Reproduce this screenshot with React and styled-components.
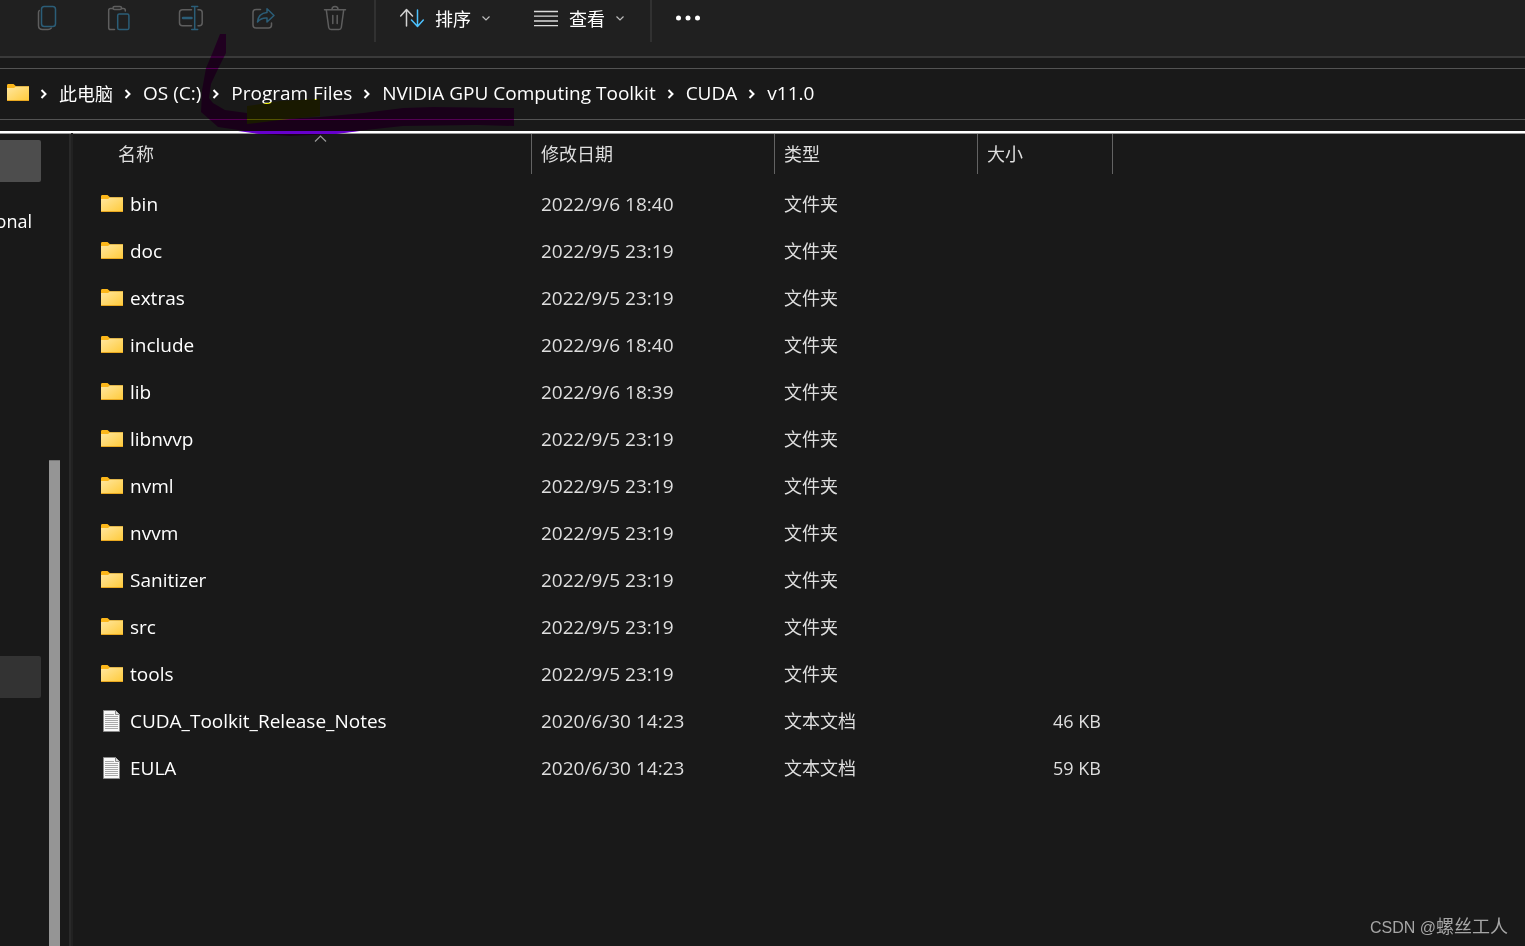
import React from "react";
import styled, { createGlobalStyle } from "styled-components";

const Global = createGlobalStyle`
  *, *::before, *::after { box-sizing: border-box; }
  body {
    margin: 0;
    background: #191919;
    color: #fff;
    font-family: "Open Sans", "Noto Sans CJK SC", sans-serif;
    font-size: 19px;
  }
  button { font: inherit; color: inherit; background: none; border: 0; padding: 0; }
`;

const Window = styled.div`
  position: relative;
  display: flex;
  flex-direction: column;
  min-height: 100vh;
  overflow: hidden;
`;

const Toolbar = styled.div`
  display: flex;
  align-items: flex-start;
  height: 58px;
  padding-left: 11px;
  background: #202020;
  border-bottom: 2px solid #3a3a3a;
`;

const IconButton = styled.button`
  display: flex;
  align-items: center;
  justify-content: center;
  width: 72px;
  height: 36px;
`;

const MenuButton = styled.button`
  display: flex;
  align-items: center;
  gap: 11px;
  height: 36px;
  margin-left: ${(p) => p.$gap}px;
  font-size: 18px;
`;

const Separator = styled.span`
  width: 2px;
  height: 42px;
  margin-left: ${(p) => p.$gap}px;
  background: #313131;
`;

const AddressArea = styled.div`
  padding: 10px 0 11px;
`;

const AddressBar = styled.nav`
  display: flex;
  align-items: center;
  height: 52px;
  padding: 0 7px 2px;
  border-top: 1px solid #535353;
  border-bottom: 1px solid #535353;
  white-space: nowrap;
`;

const Crumb = styled.a`
  color: #fff;
  text-decoration: none;
  font-size: ${(p) => (p.$cjk ? 18 : 19)}px;
`;

const CrumbArrow = styled.svg`
  flex: none;
  width: 7px;
  height: 10px;
  margin: 2px 12px 0 11px;
`;

const Body = styled.div`
  display: flex;
  flex: 1;
  border-top: 2px solid #fff;
  box-shadow: inset 0 1px #999;
`;

const Sidebar = styled.aside`
  display: flex;
  flex: none;
  width: 73px;
  padding-top: 1px;
  border-right: 2px solid #212121;
`;

const Tree = styled.div`
  display: flex;
  flex-direction: column;
  width: 41px;
  padding-top: 6px;
  overflow: hidden;
`;

const TreeItem = styled.button`
  display: flex;
  flex: none;
  align-items: center;
  justify-content: flex-end;
  height: 42px;
  margin-top: ${(p) => p.$gap || 0}px;
  padding-right: 9px;
  border-radius: 0 2px 2px 0;
  background: ${(p) => p.$tone || "transparent"};
  font-size: 18px;
`;

const ScrollTrack = styled.div`
  display: flex;
  width: 30px;
  padding: 326px 9px 0 8px;
  border-right: 2px solid #292929;
`;

const ScrollThumb = styled.div`
  flex: 1;
  background: #959595;
  border-top: 1px solid #777;
`;

const Main = styled.main`
  flex: 1;
  min-width: 0;
  padding-top: 1px;
`;

const Files = styled.table`
  table-layout: fixed;
  width: 1040px;
  border-collapse: separate;
  border-spacing: 0;
  white-space: nowrap;
`;

const HeadCell = styled.th`
  position: relative;
  width: ${(p) => p.$width}px;
  height: 40px;
  padding: 0 0 0 ${(p) => p.$indent || 9}px;
  border-right: 1px solid #636363;
  color: #dedede;
  font-size: 18px;
  font-weight: 400;
  line-height: 24px;
  text-align: left;
`;

const SortMark = styled.svg`
  position: absolute;
  top: 1px;
  right: 204px;
  width: 13px;
  height: 7px;
`;

const FileRows = styled.tbody`
  &::before { content: ""; display: block; height: 6px; }
`;

const Cell = styled.td`
  height: 47px;
  padding: 0 ${(p) => (p.$right ? 12 : 0)}px 0 9px;
  color: #dedede;
  font-size: ${(p) => (p.$small ? 18 : 19)}px;
  line-height: 26px;
  text-align: ${(p) => (p.$right ? "right" : "left")};
`;

const FileName = styled.div`
  display: flex;
  align-items: center;
  gap: 7px;
  padding-left: 19px;
  color: #fff;
`;

const Annotation = styled.svg`
  position: absolute;
  top: 0;
  left: 0;
  width: 530px;
  height: 140px;
  pointer-events: none;
  mix-blend-mode: ${(p) => p.$blend || "normal"};
`;

const Watermark = styled.footer`
  position: absolute;
  right: 17px;
  bottom: 5px;
  color: #a6a6a6;
  font-family: "Liberation Sans", "Noto Sans CJK SC", sans-serif;
  font-size: 16px;
  line-height: 26px;
`;

const Author = styled.span`
  font-size: 18px;
`;

const GREY = "#5e5e5e";
const BLUE = "#2b5d77";

const ToolIcon = ({ children }) => (
  <svg width="26" height="26" viewBox="0 0 26 26" fill="none" stroke={GREY} strokeWidth="1.5" strokeLinecap="round" strokeLinejoin="round" aria-hidden="true">
    {children}
  </svg>
);

const CopyIcon = () => (
  <ToolIcon>
    <path d="M5.300 5.500c-.6.6-.8 1.300-.8 2v13c0 2.500 1.500 4 4 4h5.500c1.500 0 2.500-.5 3.300-1.500" />
    <rect x="7.500" y="1.500" width="14" height="20" rx="2.800" stroke={BLUE} />
  </ToolIcon>
);

const PasteIcon = () => (
  <ToolIcon>
    <path d="M6.500 3.500H4.500c-1 0-1.800.8-1.800 1.800v17.400c0 1 .8 1.800 1.800 1.800h4M16 3.500h1.500c1 0 1.800.8 1.800 1.800V6" />
    <rect x="7" y="1.500" width="8.500" height="3" rx="1.500" />
    <rect x="11.700" y="9" width="11.200" height="15.500" rx="1.600" stroke={BLUE} />
  </ToolIcon>
);

const RenameIcon = () => (
  <ToolIcon>
    <path d="M13.500 4.700H4.500c-2 0-3 1.200-3 3v10c0 1.800 1 3 3 3h9M20 4.700h1.200c2 0 3 1.200 3 3v10c0 1.800-1 3-3 3H20" />
    <path d="M13.700 1.500h6M16.700 1.500v23M13.700 24.500h6" stroke={BLUE} />
    <path d="M5 13h8.500" stroke={BLUE} strokeWidth="2.500" />
  </ToolIcon>
);

const ShareIcon = () => (
  <ToolIcon>
    <path d="M10.500 4.500H6c-2 0-3 1.200-3 3v12.500c0 1.900 1 3 3 3h12.500c1.900 0 3-1.100 3-3V18" />
    <path d="M17 3.700 24 10.500 17 17v-4c-4-.3-7 1-9.500 4 .5-5.500 4-9 9.500-9.500z" stroke={BLUE} />
  </ToolIcon>
);

const TrashIcon = () => (
  <ToolIcon>
    <path d="M2.500 4.700h21M4.300 5l2.400 17.500c.2 1.200 1 2 2.300 2h8c1.300 0 2.100-.8 2.300-2L21.700 5M10 4.500c0-4 6-4 6 0M10.800 10.500v8M15.200 10.500v8" />
  </ToolIcon>
);

const SortIcon = () => (
  <svg width="24" height="20" viewBox="1 0 24 20" fill="none" strokeWidth="1.500" strokeLinecap="round" strokeLinejoin="round" aria-hidden="true">
    <path d="M7.500 18V2M1.700 8l5.800-6.500L13.500 8" stroke="#d2d2d2" />
    <path d="M18.500 2v16M12.500 12l6 6.500 5.800-6.500" stroke="#4cc2ff" />
  </svg>
);

const ListIcon = () => (
  <svg width="24" height="17" viewBox="0 0 24 17" fill="none" stroke="#dcdcdc" strokeWidth="1.300" aria-hidden="true">
    <path d="M0 1.500h24M0 6.200h24M0 11h24M0 15.700h24" />
  </svg>
);

const Chevron = () => (
  <svg width="8" height="5" viewBox="0 0 8 5" fill="none" stroke="#bdbdbd" strokeWidth="1.200" aria-hidden="true">
    <path d="M.5.5 4 4 7.500.5" />
  </svg>
);

const FolderIcon = () => (
  <svg width="22" height="18" viewBox="0 0 22 18" aria-hidden="true">
    <defs>
      <linearGradient id="folder" x1="0" y1="0" x2="1" y2="1">
        <stop offset="0" stopColor="#ffe7a0" />
        <stop offset="1" stopColor="#ffca39" />
      </linearGradient>
    </defs>
    <path d="M0 1.500C0 .6.500 0 1.300 0h5.200L9 2.300h13V8H0z" fill="#fcb71a" />
    <path d="M0 4h7l2-1.500h13V17H0z" fill="url(#folder)" />
    <path d="M0 16.500h22" stroke="#e9a820" />
  </svg>
);

const DocIcon = () => (
  <svg width="22" height="22" viewBox="0 0 22 22" aria-hidden="true">
    <path d="M2.500.5h12l4 4v17h-16z" fill="#f8f8f8" stroke="#8b8b8b" />
    <path d="M14.500.5v4h4" fill="#ddd" stroke="#8b8b8b" />
    <path d="M4 4.500h9M4 6.500h13M4 8.500h13M4 10.500h13M4 12.500h13M4 14.500h13M4 16.500h13M4 18.500h13" stroke="#a8a8a8" />
  </svg>
);

const tools = [
  ["复制", CopyIcon],
  ["粘贴", PasteIcon],
  ["重命名", RenameIcon],
  ["共享", ShareIcon],
  ["删除", TrashIcon],
];

const crumbs = ["此电脑", "OS (C:)", "Program Files", "NVIDIA GPU Computing Toolkit", "CUDA", "v11.0"];

const folder = (name, date) => ({ name, date, type: "文件夹" });
const files = [
  folder("bin", "2022/9/6 18:40"),
  folder("doc", "2022/9/5 23:19"),
  folder("extras", "2022/9/5 23:19"),
  folder("include", "2022/9/6 18:40"),
  folder("lib", "2022/9/6 18:39"),
  folder("libnvvp", "2022/9/5 23:19"),
  folder("nvml", "2022/9/5 23:19"),
  folder("nvvm", "2022/9/5 23:19"),
  folder("Sanitizer", "2022/9/5 23:19"),
  folder("src", "2022/9/5 23:19"),
  folder("tools", "2022/9/5 23:19"),
  { name: "CUDA_Toolkit_Release_Notes", date: "2020/6/30 14:23", type: "文本文档", size: "46 KB" },
  { name: "EULA", date: "2020/6/30 14:23", type: "文本文档", size: "59 KB" },
];

export default function App() {
  return (
    <Window>
      <Global />
      <Toolbar>
        {tools.map(([label, Icon]) => (
          <IconButton key={label} aria-label={label}><Icon /></IconButton>
        ))}
        <Separator $gap={3} />
        <MenuButton $gap={24}><SortIcon />排序<Chevron /></MenuButton>
        <MenuButton $gap={44}><ListIcon />查看<Chevron /></MenuButton>
        <Separator $gap={26} />
        <IconButton aria-label="更多">
          <svg width="26" height="6" viewBox="0 0 26 6" fill="#fff" aria-hidden="true">
            <circle cx="3.500" cy="3" r="2.500" /><circle cx="13" cy="3" r="2.500" /><circle cx="22.500" cy="3" r="2.500" />
          </svg>
        </IconButton>
      </Toolbar>
      <AddressArea>
        <AddressBar aria-label="路径">
          <FolderIcon />
          {crumbs.map((c, i) => (
            <React.Fragment key={c}>
              <CrumbArrow viewBox="0 0 7 10" fill="none" stroke="#fff" strokeWidth="2" aria-hidden="true">
                <path d="M1.500 1 5.500 5l-4 4" />
              </CrumbArrow>
              <Crumb href="#" $cjk={i === 0}>{c}</Crumb>
            </React.Fragment>
          ))}
        </AddressBar>
      </AddressArea>
      <Body>
        <Sidebar>
          <Tree>
            <TreeItem $tone="#4d4d4d" aria-label="快速访问" />
            <TreeItem $gap={18}>onal</TreeItem>
            <TreeItem $gap={414} $tone="#333" aria-label="OS (C:)" />
          </Tree>
          <ScrollTrack><ScrollThumb /></ScrollTrack>
        </Sidebar>
        <Main>
          <Files>
            <thead>
              <tr>
                <HeadCell $width={459} $indent={45}>
                  名称
                  <SortMark viewBox="0 0 13 7" fill="none" stroke="#999" strokeWidth="1.200" aria-hidden="true">
                    <path d="M1 6.500 6.500 1 12 6.500" />
                  </SortMark>
                </HeadCell>
                <HeadCell $width={243}>修改日期</HeadCell>
                <HeadCell $width={203}>类型</HeadCell>
                <HeadCell $width={135}>大小</HeadCell>
              </tr>
            </thead>
            <FileRows>
              {files.map((f) => (
                <tr key={f.name}>
                  <Cell>
                    <FileName>{f.size ? <DocIcon /> : <FolderIcon />}{f.name}</FileName>
                  </Cell>
                  <Cell>{f.date}</Cell>
                  <Cell $small>{f.type}</Cell>
                  <Cell $small $right>{f.size}</Cell>
                </tr>
              ))}
            </FileRows>
          </Files>
        </Main>
      </Body>
      <Annotation $blend="multiply" viewBox="0 0 530 140" aria-hidden="true">
        <path d="M220 34H226V53L218 69L211 84L209 98L213 103L225 110L247 113L280 119L320 117L363 113L403 108L433 107L514 108V126L477 125L403 126L357 131L333 134L290 136L260 134L238 130L218 127L209 119L201 112L202 90L206 68L212 54Z" fill="#f0f" />
        <path d="M247 106L280 101L320 99V116L280 120L247 124Z" fill="#ff0" />
      </Annotation>
      <Annotation viewBox="0 0 530 140" aria-hidden="true">
        <path d="M238 131h122l-24 3h-76z" fill="#60c" />
      </Annotation>
      <Watermark>CSDN @<Author>螺丝工人</Author></Watermark>
    </Window>
  );
}
